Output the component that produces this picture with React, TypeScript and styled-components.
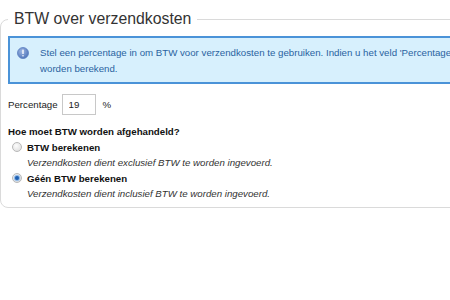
import React from "react";
import styled, { createGlobalStyle } from "styled-components";

const GlobalStyle = createGlobalStyle`
    html, body {
        margin: 0;
        padding: 0;
        background: #fff;
        overflow: hidden;
    }
    body {
        padding-top: 9px;
        font-family: "Liberation Sans", Arial, sans-serif;
    }
`;

const Fieldset = styled.fieldset`
    margin: 0;
    width: 640px;
    border: 1px solid #dadada;
    border-radius: 8px;
    padding: 7px 0 6px 7px;
    box-sizing: border-box;
`;

const Legend = styled.legend`
    font-size: 15.8px;
    line-height: 20px;
    color: #333;
    padding: 0 6px;
    margin-left: 0;
`;

const InfoBox = styled.div`
    display: flex;
    align-items: flex-start;
    gap: 11px;
    border: 2px solid #4a93d8;
    background: #d7f0fd;
    padding: 7px 8px 5px 7px;
    font-size: 9.7px;
    line-height: 16px;
    color: #2a63a0;
    white-space: nowrap;
`;

const InfoIcon = styled.svg`
    flex: none;
    margin-top: 2px;
`;

const Row = styled.div`
    display: flex;
    align-items: center;
    margin-top: 10px;
    font-size: 9.7px;
    color: #222;
`;

const Input = styled.input`
    width: 34px;
    height: 21px;
    box-sizing: border-box;
    border: 1px solid #c8c8c8;
    margin: 0 7px 0 4px;
    padding: 0 6px;
    font: 9.7px "Liberation Sans", Arial, sans-serif;
    color: #222;
    outline: none;
`;

const Question = styled.div`
    margin-top: 9px;
    font-size: 9.7px;
    line-height: 15px;
    font-weight: bold;
    color: #111;
`;

const Option = styled.label`
    display: flex;
    align-items: center;
    gap: 5px;
    padding-left: 4px;
    height: 16px;
    font-size: 9.7px;
    font-weight: bold;
    color: #111;
`;

const Radio = styled.span<{ $checked?: boolean }>`
    width: 10px;
    height: 10px;
    border-radius: 50%;
    box-sizing: border-box;
    border: 1px solid #b9b9b9;
    background: radial-gradient(circle at 40% 35%, #fdfdfd 0%, #e4e4e4 70%, #d0d0d0 100%);
    display: flex;
    align-items: center;
    justify-content: center;
    &::after {
        content: "";
        display: ${p => (p.$checked ? "block" : "none")};
        width: 4px;
        height: 4px;
        border-radius: 50%;
        background: #1f5fb0;
        box-shadow: 0 0 1px 1px #7fb0e6;
    }
`;

const Description = styled.div`
    padding-left: 19px;
    font-size: 9.7px;
    line-height: 15px;
    font-style: italic;
    color: #333;
`;

const options = [
    { label: "BTW berekenen", text: "Verzendkosten dient exclusief BTW te worden ingevoerd.", checked: false },
    { label: "Géén BTW berekenen", text: "Verzendkosten dient inclusief BTW te worden ingevoerd.", checked: true },
];

const App: React.FC = () => {
    return (
        <>
            <GlobalStyle />
            <Fieldset>
                <Legend>BTW over verzendkosten</Legend>
                <InfoBox>
                    <InfoIcon width="12" height="12" viewBox="0 0 12 12">
                        <defs>
                            <radialGradient id="ig" cx="40%" cy="35%" r="70%">
                                <stop offset="0%" stopColor="#9fb8e4" />
                                <stop offset="100%" stopColor="#4d73b8" />
                            </radialGradient>
                        </defs>
                        <circle cx="6" cy="6" r="5.5" fill="url(#ig)" stroke="#5a7fc0" strokeWidth="0.8" />
                        <rect x="5.3" y="2.5" width="1.4" height="4.5" rx="0.6" fill="#fff" />
                        <rect x="5.3" y="8" width="1.4" height="1.4" rx="0.6" fill="#fff" />
                    </InfoIcon>
                    <div>
                        Stel een percentage in om BTW voor verzendkosten te gebruiken. Indien u het veld 'Percentage' leeg laat zal er geen BTW over de verzendkosten
                        <br />
                        worden berekend.
                    </div>
                </InfoBox>
                <Row>
                    Percentage
                    <Input defaultValue="19" />
                    %
                </Row>
                <Question>Hoe moet BTW worden afgehandeld?</Question>
                {options.map(o => (
                    <React.Fragment key={o.label}>
                        <Option>
                            <Radio $checked={o.checked} />
                            {o.label}
                        </Option>
                        <Description>{o.text}</Description>
                    </React.Fragment>
                ))}
            </Fieldset>
        </>
    );
};

export default App;
